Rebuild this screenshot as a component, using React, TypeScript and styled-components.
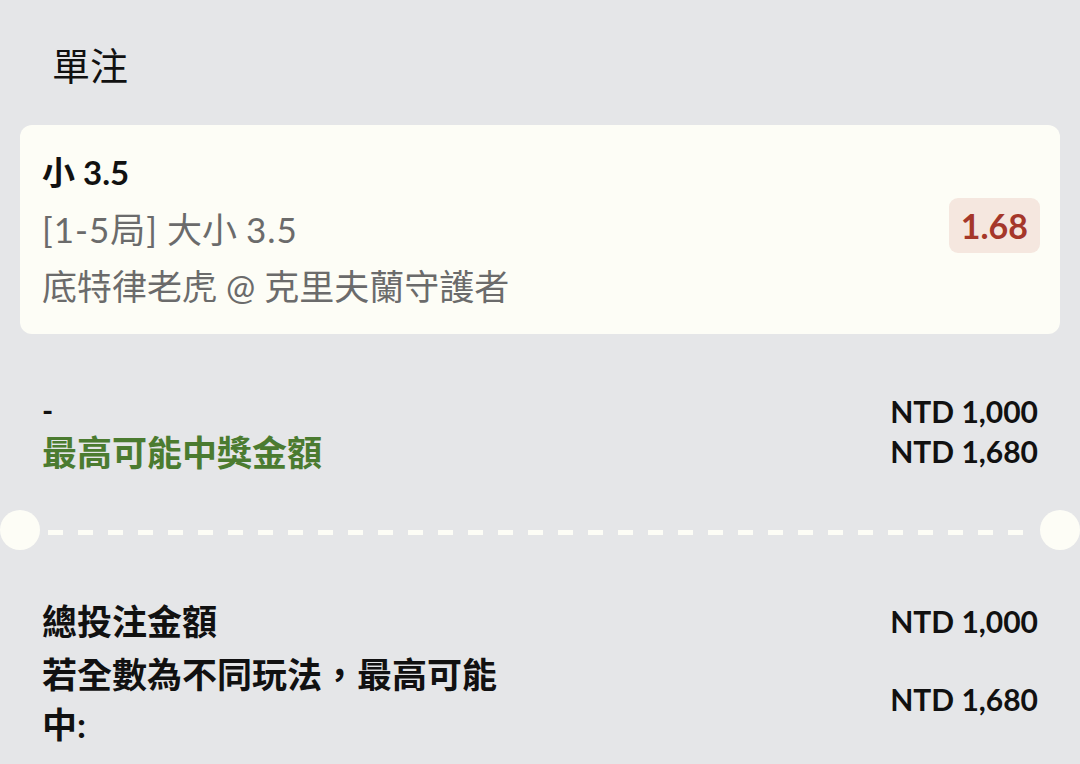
import styled, { createGlobalStyle } from "styled-components";

const GlobalStyle = createGlobalStyle`
  html, body {
    margin: 0;
    padding: 0;
    background: #e5e6e8;
  }
  body {
    font-family: Lato, "Noto Sans CJK TC", sans-serif;
    color: #111;
  }
`;

const Page = styled.div`
  width: 1080px;
  height: 764px;
  overflow: hidden;
  background: #e5e6e8;
`;

const Title = styled.h1`
  margin: 0;
  padding: 42px 0 0 52px;
  height: 125px;
  box-sizing: border-box;
  font-size: 38px;
  line-height: 46px;
  font-weight: 400;
`;

const Card = styled.div`
  margin: 0 20px;
  background: #fdfdf6;
  border-radius: 12px;
  padding: 19px 20px 19px 22px;
  display: flex;
  align-items: center;
  justify-content: space-between;
`;

const CardInfo = styled.div`
  display: flex;
  flex-direction: column;
`;

const CardLine = styled.div<{ $strong?: boolean }>`
  font-size: ${(p) => (p.$strong ? 33 : 35)}px;
  line-height: 57px;
  font-weight: ${(p) => (p.$strong ? 700 : 400)};
  color: ${(p) => (p.$strong ? "#111" : "#6b6b6b")};
`;

const Wide = styled.span`
  letter-spacing: 1px;
  word-spacing: 3px;
`;

const OddsBadge = styled.div`
  background: #f5e7df;
  color: #a5372a;
  border-radius: 9px;
  font-size: 34px;
  font-weight: 700;
  line-height: 55px;
  padding: 0 12px;
  margin-bottom: 8px;
`;

const Summary = styled.div`
  display: flex;
  justify-content: space-between;
  align-items: flex-start;
  padding: 57px 42px 0;
`;

const SummaryLabels = styled.div`
  display: flex;
  flex-direction: column;
`;

const Dash = styled.div`
  font-size: 30px;
  font-weight: 700;
  line-height: 38px;
`;

const Highlight = styled.div`
  color: #4b7b30;
  font-size: 35px;
  font-weight: 700;
  line-height: 46px;
`;

const Amounts = styled.div`
  display: flex;
  flex-direction: column;
  align-items: flex-end;
`;

const Amount = styled.div`
  font-size: 30px;
  font-weight: 700;
  line-height: 40px;
  white-space: nowrap;
`;

const Divider = styled.div`
  display: flex;
  align-items: center;
  margin-top: 35px;
  height: 40px;
`;

const Notch = styled.div`
  width: 40px;
  height: 40px;
  border-radius: 50%;
  background: #fdfdf6;
  flex: none;
`;

const DashLine = styled.div`
  flex: 1;
  height: 5px;
  margin: 4px 7px 0 8px;
  background: repeating-linear-gradient(
    to right,
    #fdfdf6 0 15px,
    transparent 15px 30px
  );
`;

const Totals = styled.div`
  display: grid;
  grid-template-columns: 480px 1fr;
  row-gap: 3px;
  padding: 46px 42px 0;
`;

const TotalLabel = styled.div`
  font-size: 35px;
  font-weight: 700;
  line-height: 50px;
`;

const TotalValue = styled.div`
  font-size: 30px;
  font-weight: 700;
  display: flex;
  align-items: center;
  justify-content: flex-end;
  white-space: nowrap;
`;

export default function App() {
  return (
    <Page>
      <GlobalStyle />
      <Title>單注</Title>
      <Card>
        <CardInfo>
          <CardLine $strong>小 3.5</CardLine>
          <CardLine>
            <Wide>[1-5局]</Wide> 大小 <Wide>3.5</Wide>
          </CardLine>
          <CardLine>底特律老虎 @ 克里夫蘭守護者</CardLine>
        </CardInfo>
        <OddsBadge>1.68</OddsBadge>
      </Card>
      <Summary>
        <SummaryLabels>
          <Dash>-</Dash>
          <Highlight>最高可能中獎金額</Highlight>
        </SummaryLabels>
        <Amounts>
          <Amount>NTD 1,000</Amount>
          <Amount>NTD 1,680</Amount>
        </Amounts>
      </Summary>
      <Divider>
        <Notch />
        <DashLine />
        <Notch />
      </Divider>
      <Totals>
        <TotalLabel>總投注金額</TotalLabel>
        <TotalValue>NTD 1,000</TotalValue>
        <TotalLabel>若全數為不同玩法，最高可能中:</TotalLabel>
        <TotalValue>NTD 1,680</TotalValue>
      </Totals>
    </Page>
  );
}
